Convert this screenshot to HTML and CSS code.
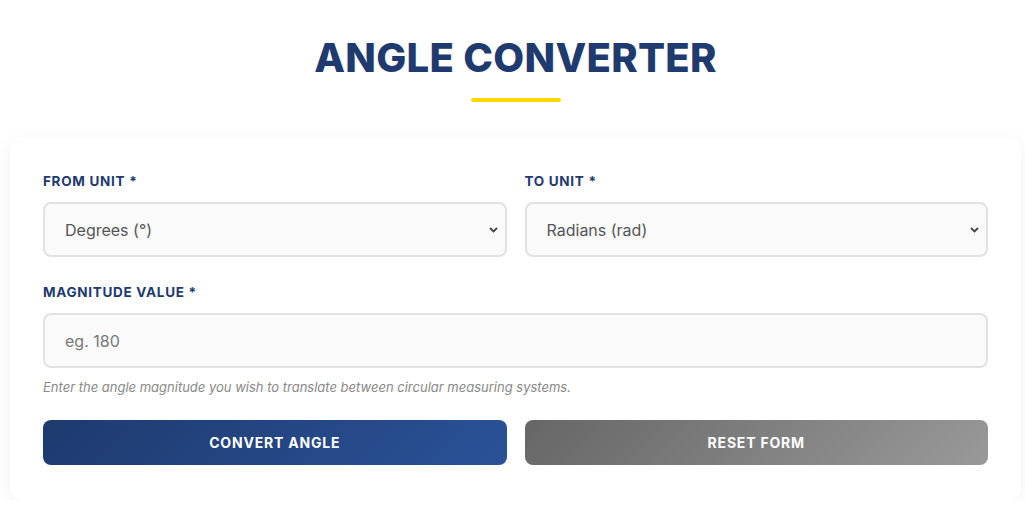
FILE: index.html
```html
<!DOCTYPE html>
<html lang="en">

<head>
  <meta charset="UTF-8">
  <meta name="viewport" content="width=device-width, initial-scale=1.0">
  <title>Angle Converter</title>
  <link rel="stylesheet" href="styles.css">
</head>

<body>
  <div class="page">
    <div class="header">
      <h1 class="title">ANGLE CONVERTER</h1>
      <div class="title-line"></div>
    </div>

    <div class="card">
      <form class="converter" onsubmit="return false">
        <div class="row">
          <div class="field">
            <label for="fromUnit">FROM UNIT *</label>
            <select id="fromUnit" name="fromUnit">
              <option>Degrees (°)</option>
              <option>Radians (rad)</option>
              <option>Gradians (grad)</option>
              <option>Turns (tr)</option>
            </select>
          </div>
          <div class="field">
            <label for="toUnit">TO UNIT *</label>
            <select id="toUnit" name="toUnit">
              <option>Radians (rad)</option>
              <option>Degrees (°)</option>
              <option>Gradians (grad)</option>
              <option>Turns (tr)</option>
            </select>
          </div>
        </div>

        <div class="field">
          <label for="magnitude">MAGNITUDE VALUE *</label>
          <input type="text" id="magnitude" name="magnitude" placeholder="eg. 180">
          <p class="hint">Enter the angle magnitude you wish to translate between circular measuring systems.</p>
        </div>

        <div class="row buttons">
          <button type="submit" class="btn btn-convert">CONVERT ANGLE</button>
          <button type="reset" class="btn btn-reset">RESET FORM</button>
        </div>
      </form>
    </div>
  </div>
</body>

</html>
```

FILE: styles.css
```css
body {
  margin: 0;
  padding: 0;
  background-color: #fff;
  font-family: "Inter", "Noto Sans", sans-serif;
}

.page {
  margin: 0 4px 0 10px;
}

.header {
  padding-top: 30px;
  text-align: center;
}

.title {
  margin: 0;
  font-size: 40px;
  line-height: 56px;
  font-weight: 800;
  letter-spacing: 0.3px;
  color: #1e3a6e;
}

.title-line {
  width: 90px;
  height: 4px;
  margin: 12px auto 0;
  border-radius: 2px;
  background-color: #ffd700;
}

.card {
  margin-top: 35px;
  padding: 34px 33px 35px;
  background-color: #fff;
  border-radius: 12px;
  box-shadow: 0 4px 18px rgba(0, 0, 0, 0.06);
}

.converter {
  display: flex;
  flex-direction: column;
  gap: 25px;
}

.row {
  display: grid;
  grid-template-columns: 1fr 1fr;
  gap: 18px;
}

.field {
  display: flex;
  flex-direction: column;
}

.field label {
  margin-bottom: 11px;
  font-size: 13.5px;
  line-height: 20px;
  font-weight: 700;
  letter-spacing: 0.7px;
  color: #1e3a6e;
}

.field select,
.field input {
  box-sizing: border-box;
  height: 55px;
  padding: 0 20px;
  border: 2px solid #e2e2e2;
  border-radius: 8px;
  background-color: #fafafa;
  font-family: inherit;
  font-size: 16px;
  color: #555;
  outline: none;
}

.field select {
  appearance: none;
  background-image: url("data:image/svg+xml;utf8,<svg xmlns='http://www.w3.org/2000/svg' width='9' height='6' viewBox='0 0 9 6'><path d='M1 1l3.5 3.5L8 1' fill='none' stroke='%23444' stroke-width='1.8'/></svg>");
  background-repeat: no-repeat;
  background-position: right 7px center;
}

.field input::placeholder {
  color: #777;
}

.hint {
  margin: 11px 0 0;
  font-size: 13px;
  font-style: italic;
  color: #888;
}

.btn {
  height: 45px;
  border: none;
  border-radius: 8px;
  font-family: inherit;
  font-size: 14px;
  font-weight: 700;
  letter-spacing: 0.8px;
  color: #fff;
  cursor: pointer;
}

.btn-convert {
  background: linear-gradient(135deg, #1e3a6e, #2a5298);
}

.btn-reset {
  background: linear-gradient(135deg, #666, #999);
}
```
